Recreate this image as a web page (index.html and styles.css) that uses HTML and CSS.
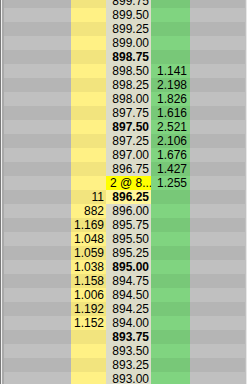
FILE: index.html
```html
<!DOCTYPE html>
<html lang="en">
<head>
<meta charset="UTF-8" />
<meta name="viewport" content="width=device-width, initial-scale=1" />
<title>Ladder</title>
<link rel="stylesheet" href="styles.css">
</head>
<body>
<main class="ladder">
  <div class="row"><span class="c-side"></span><span class="c-bid"></span><span class="c-price">899.75</span><span class="c-ask"></span><span class="c-side"></span></div>
  <div class="row"><span class="c-side"></span><span class="c-bid"></span><span class="c-price">899.50</span><span class="c-ask"></span><span class="c-side"></span></div>
  <div class="row"><span class="c-side"></span><span class="c-bid"></span><span class="c-price">899.25</span><span class="c-ask"></span><span class="c-side"></span></div>
  <div class="row"><span class="c-side"></span><span class="c-bid"></span><span class="c-price">899.00</span><span class="c-ask"></span><span class="c-side"></span></div>
  <div class="row"><span class="c-side"></span><span class="c-bid"></span><span class="c-price bold">898.75</span><span class="c-ask"></span><span class="c-side"></span></div>
  <div class="row"><span class="c-side"></span><span class="c-bid"></span><span class="c-price">898.50</span><span class="c-ask">1.141</span><span class="c-side"></span></div>
  <div class="row"><span class="c-side"></span><span class="c-bid"></span><span class="c-price">898.25</span><span class="c-ask">2.198</span><span class="c-side"></span></div>
  <div class="row"><span class="c-side"></span><span class="c-bid"></span><span class="c-price">898.00</span><span class="c-ask">1.826</span><span class="c-side"></span></div>
  <div class="row"><span class="c-side"></span><span class="c-bid"></span><span class="c-price">897.75</span><span class="c-ask">1.616</span><span class="c-side"></span></div>
  <div class="row"><span class="c-side"></span><span class="c-bid"></span><span class="c-price bold">897.50</span><span class="c-ask">2.521</span><span class="c-side"></span></div>
  <div class="row"><span class="c-side"></span><span class="c-bid"></span><span class="c-price">897.25</span><span class="c-ask">2.106</span><span class="c-side"></span></div>
  <div class="row"><span class="c-side"></span><span class="c-bid"></span><span class="c-price">897.00</span><span class="c-ask">1.676</span><span class="c-side"></span></div>
  <div class="row"><span class="c-side"></span><span class="c-bid"></span><span class="c-price">896.75</span><span class="c-ask">1.427</span><span class="c-side"></span></div>
  <div class="row"><span class="c-side"></span><span class="c-bid"></span><span class="c-price fill">2 @ 8...</span><span class="c-ask">1.255</span><span class="c-side"></span></div>
  <div class="row"><span class="c-side"></span><span class="c-bid">11</span><span class="c-price bold last">896.25</span><span class="c-ask"></span><span class="c-side"></span></div>
  <div class="row"><span class="c-side"></span><span class="c-bid">882</span><span class="c-price">896.00</span><span class="c-ask"></span><span class="c-side"></span></div>
  <div class="row"><span class="c-side"></span><span class="c-bid">1.169</span><span class="c-price">895.75</span><span class="c-ask"></span><span class="c-side"></span></div>
  <div class="row"><span class="c-side"></span><span class="c-bid">1.048</span><span class="c-price">895.50</span><span class="c-ask"></span><span class="c-side"></span></div>
  <div class="row"><span class="c-side"></span><span class="c-bid">1.059</span><span class="c-price">895.25</span><span class="c-ask"></span><span class="c-side"></span></div>
  <div class="row"><span class="c-side"></span><span class="c-bid">1.038</span><span class="c-price bold">895.00</span><span class="c-ask"></span><span class="c-side"></span></div>
  <div class="row"><span class="c-side"></span><span class="c-bid">1.158</span><span class="c-price">894.75</span><span class="c-ask"></span><span class="c-side"></span></div>
  <div class="row"><span class="c-side"></span><span class="c-bid">1.006</span><span class="c-price">894.50</span><span class="c-ask"></span><span class="c-side"></span></div>
  <div class="row"><span class="c-side"></span><span class="c-bid">1.192</span><span class="c-price">894.25</span><span class="c-ask"></span><span class="c-side"></span></div>
  <div class="row"><span class="c-side"></span><span class="c-bid">1.152</span><span class="c-price">894.00</span><span class="c-ask"></span><span class="c-side"></span></div>
  <div class="row"><span class="c-side"></span><span class="c-bid"></span><span class="c-price bold">893.75</span><span class="c-ask"></span><span class="c-side"></span></div>
  <div class="row"><span class="c-side"></span><span class="c-bid"></span><span class="c-price">893.50</span><span class="c-ask"></span><span class="c-side"></span></div>
  <div class="row"><span class="c-side"></span><span class="c-bid"></span><span class="c-price">893.25</span><span class="c-ask"></span><span class="c-side"></span></div>
  <div class="row"><span class="c-side"></span><span class="c-bid"></span><span class="c-price">893.00</span><span class="c-ask"></span><span class="c-side"></span></div>
</main>
</body>
</html>
```
FILE: styles.css
```css
/* DOM ladder - colunas fixas */
html, body {
  margin: 0;
  padding: 0;
  height: 100%;
  overflow: hidden;
  background: #c0c0c0;
}
body {
  font-family: 'Liberation Sans', Arial, sans-serif;
  font-size: 12px;
  color: #000;
}
main.ladder {
  margin-top: -6px;
  border-left: 1px solid #7a7a7a;
  border-right: 1px solid #e6e6e6;
  width: 245px;
  box-shadow: inset 1px 0 0 #f0f0f0;
}
.row {
  display: grid;
  grid-template-columns: 70px 35px 45px 39px 55px;
  height: 14px;
  line-height: 15px;
  padding-left: 0;
}
.row span {
  display: block;
  height: 14px;
  overflow: hidden;
  white-space: nowrap;
}
.c-side {
  background: #c0c0c0;
}
.row span:first-child {
  border-left: 2px solid #a9a9a9;
  margin-left: 1px;
}
.c-bid {
  background: #fff185;
  text-align: right;
  padding-right: 2px;
}
.c-price {
  background: #dcdcc9;
  text-align: right;
  padding-right: 2px;
}
.c-ask {
  background: #80d480;
  text-align: right;
  padding-right: 3px;
}
.row:nth-child(odd) .c-side { background: #b5b5b5; }
.row:nth-child(odd) .c-bid { background: #f2e47e; }
.row:nth-child(odd) .c-ask { background: #78c878; }

.bold { font-weight: 700; }
.c-price.fill {
  background: #ffff00;
  text-align: left;
  padding-left: 4px;
  padding-right: 0;
}
.c-price.last { background: #fff59a; }
```
